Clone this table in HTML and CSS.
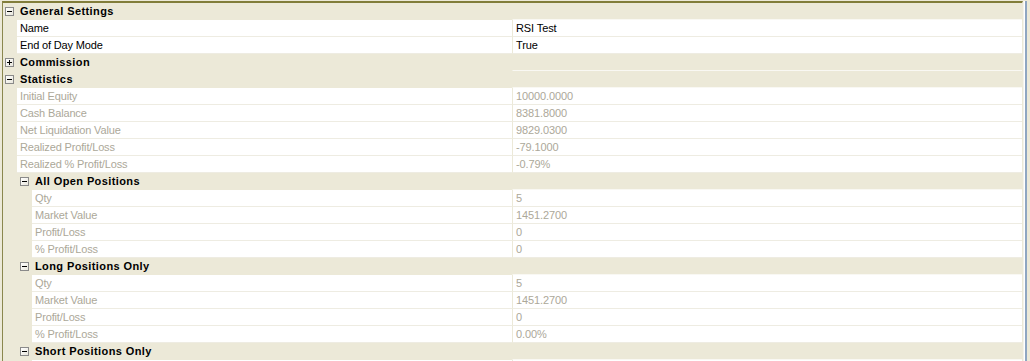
FILE: index.html
```html
<!DOCTYPE html>
<html>
<head>
<meta charset="utf-8">
<link rel="stylesheet" href="styles.css">
</head>
<body>
<div class="frame">
  <div class="grid">
    <div class="row cat l0"><div class="gutter"><span class="box minus"></span></div><div class="label">General Settings</div><div class="value"></div></div>
    <div class="row prop l0"><div class="gutter"></div><div class="label">Name</div><div class="value">RSI Test</div></div>
    <div class="row prop l0"><div class="gutter"></div><div class="label">End of Day Mode</div><div class="value">True</div></div>
    <div class="row cat l0"><div class="gutter"><span class="box plus"></span></div><div class="label">Commission</div><div class="value"></div></div>
    <div class="row cat l0"><div class="gutter"><span class="box minus"></span></div><div class="label">Statistics</div><div class="value"></div></div>
    <div class="row prop l0 ro"><div class="gutter"></div><div class="label">Initial Equity</div><div class="value">10000.0000</div></div>
    <div class="row prop l0 ro"><div class="gutter"></div><div class="label">Cash Balance</div><div class="value">8381.8000</div></div>
    <div class="row prop l0 ro"><div class="gutter"></div><div class="label">Net Liquidation Value</div><div class="value">9829.0300</div></div>
    <div class="row prop l0 ro"><div class="gutter"></div><div class="label">Realized Profit/Loss</div><div class="value">-79.1000</div></div>
    <div class="row prop l0 ro"><div class="gutter"></div><div class="label">Realized % Profit/Loss</div><div class="value">-0.79%</div></div>
    <div class="row cat l1"><div class="gutter"><span class="box minus"></span></div><div class="label">All Open Positions</div><div class="value"></div></div>
    <div class="row prop l1 ro"><div class="gutter"></div><div class="label">Qty</div><div class="value">5</div></div>
    <div class="row prop l1 ro"><div class="gutter"></div><div class="label">Market Value</div><div class="value">1451.2700</div></div>
    <div class="row prop l1 ro"><div class="gutter"></div><div class="label">Profit/Loss</div><div class="value">0</div></div>
    <div class="row prop l1 ro"><div class="gutter"></div><div class="label">% Profit/Loss</div><div class="value">0</div></div>
    <div class="row cat l1"><div class="gutter"><span class="box minus"></span></div><div class="label">Long Positions Only</div><div class="value"></div></div>
    <div class="row prop l1 ro"><div class="gutter"></div><div class="label">Qty</div><div class="value">5</div></div>
    <div class="row prop l1 ro"><div class="gutter"></div><div class="label">Market Value</div><div class="value">1451.2700</div></div>
    <div class="row prop l1 ro"><div class="gutter"></div><div class="label">Profit/Loss</div><div class="value">0</div></div>
    <div class="row prop l1 ro"><div class="gutter"></div><div class="label">% Profit/Loss</div><div class="value">0.00%</div></div>
    <div class="row cat l1"><div class="gutter"><span class="box minus"></span></div><div class="label">Short Positions Only</div><div class="value"></div></div>
    <div class="row prop l1 ro"><div class="gutter"></div><div class="label"></div><div class="value"></div></div>
  </div>
  <div class="side"></div>
</div>
</body>
</html>
```
FILE: styles.css
```css
*, *::before, *::after { box-sizing: border-box; }
html, body {
  margin: 0;
  padding: 0;
  background: #ECE9D8;
  overflow: hidden;
}
body {
  font-family: "Liberation Sans", Arial, sans-serif;
  font-size: 11px;
  color: #000;
}
.frame {
  display: flex;
  height: 361px;
  overflow: hidden;
  padding-top: 1px;
}
.grid {
  margin-left: 2px;
  width: 1021px;
  border-left: 1px solid #8A874E;
  border-top: 2px solid #817D3A;
  border-right: 1px solid #ECE9D8;
  background: #ECE9D8;
  flex: none;
}
.side {
  width: 4px;
  flex: none;
  background: #fff;
  border-left: 1px solid #F4F3EC;
  border-right: 2px solid #8FA6C2;
}
.row {
  display: flex;
  height: 17px;
  line-height: 16px;
}
.gutter {
  flex: none;
  position: relative;
  background: #ECE9D8;
}
.l0 .gutter { width: 14px; }
.l1 .gutter { width: 29px; }
.label {
  width: 495px;
  flex: none;
  padding-left: 3px;
  white-space: nowrap;
  overflow: hidden;
  letter-spacing: -0.15px;
}
.l1 .label { width: 480px; }
.value {
  flex: 1;
  padding-left: 3px;
  white-space: nowrap;
  letter-spacing: -0.1px;
}
.prop .label {
  background: #fff;
  border-bottom: 1px solid #EEECE2;
  height: 17px;
}
.prop .value {
  background: #fff;
  border-left: 1px solid #ECE9D8;
  border-bottom: 1px solid #EEECE2;
  height: 17px;
}
.cat .label {
  font-weight: bold;
  background: #ECE9D8;
  height: 17px;
  line-height: 17px;
  letter-spacing: 0.4px;
}
.cat .value {
  background: #ECE9D8;
  border-left: 1px solid #ECE9D8;
  border-bottom: 1px solid #F9F8F3;
  height: 17px;
}
.ro .label, .ro .value { color: #ACA899; }
.box {
  position: absolute;
  top: 4px;
  width: 9px;
  height: 9px;
  border: 1px solid #8A8A8A;
  background: linear-gradient(135deg, #ffffff, #E8E6DC);
}
.l0 .box { left: 2px; }
.l1 .box { left: 17px; }
.box::before {
  content: "";
  position: absolute;
  left: 1px;
  top: 3px;
  width: 5px;
  height: 1px;
  background: #000;
}
.plus::after {
  content: "";
  position: absolute;
  left: 3px;
  top: 1px;
  width: 1px;
  height: 5px;
  background: #000;
}
```
